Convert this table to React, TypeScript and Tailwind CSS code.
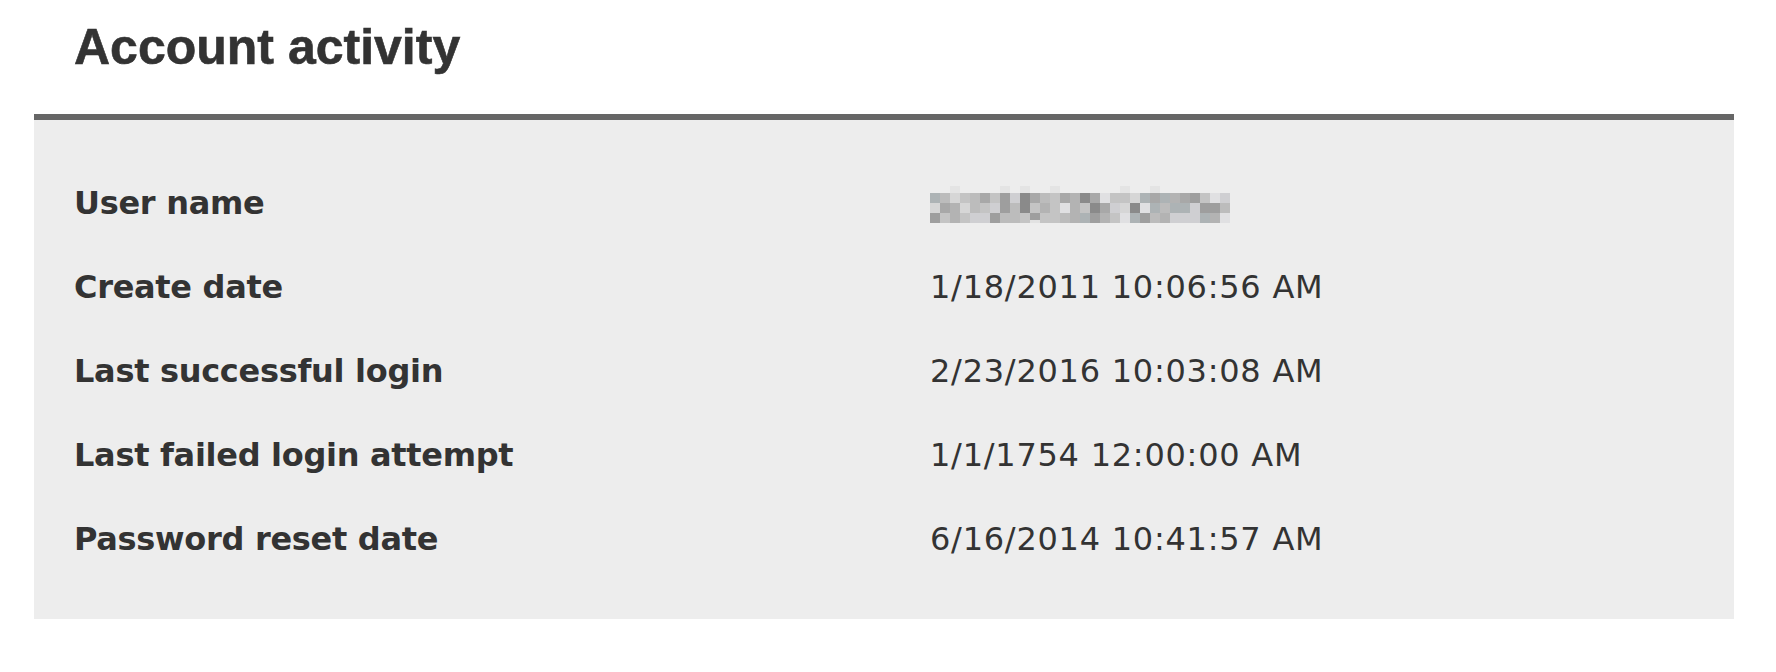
import React from "react"

// fake pixelated e-mail (blurred in the original), fixed pattern
const SHADES = ["#d6d6d6", "#a8a8a8", "#8a8a8a", "#c4c4c4", "#b3b3b3", "#9e9e9e", "#cfcfd2", "#e0e0e2", "#adb3b5", "#bcbcbc"]

function buildPixels() {
  let seed = 17
  const next = () => {
    seed = (seed * 9301 + 49297) % 233280
    return seed / 233280
  }
  const rows: string[][] = []
  for (let r = 0; r < 3; r++) {
    const row: string[] = []
    for (let c = 0; c < 30; c++) {
      let idx = Math.floor(next() * SHADES.length)
      if (r === 2 && idx < 3) idx += 3
      row.push(SHADES[idx])
    }
    rows.push(row)
  }
  return rows
}

const PIXELS = buildPixels()

function BlurredEmail() {
  return (
    <svg width="300" height="40" viewBox="0 0 300 40" className="block">
      {[2, 7, 9, 12, 19, 22].map((c) => (
        <rect key={"t" + c} x={c * 10} y={3} width={10} height={7} fill="#e4e4e4" />
      ))}
      {PIXELS.map((row, r) =>
        row.map((fill, c) => (
          <rect key={r + "-" + c} x={c * 10} y={10 + r * 10} width={10} height={10} fill={fill} />
        ))
      )}
      <rect x={100} y={37} width={10} height={3} fill="#e2e2e2" />
    </svg>
  )
}

const rows: { label: string; value: string | null }[] = [
  { label: "User name", value: null },
  { label: "Create date", value: "1/18/2011 10:06:56 AM" },
  { label: "Last successful login", value: "2/23/2016 10:03:08 AM" },
  { label: "Last failed login attempt", value: "1/1/1754 12:00:00 AM" },
  { label: "Password reset date", value: "6/16/2014 10:41:57 AM" },
]

export default function App() {
  return (
    <div className="w-[1776px] h-[672px] bg-white text-[#333333]">
      {/* Heading */}
      <div className="pl-[74px] pt-[22px]">
        <h1
          className="text-[50px] leading-none font-bold [-webkit-text-stroke:0.6px_#333333]"
          style={{ fontFamily: '"Liberation Sans", Arial, sans-serif' }}
        >
          Account activity
        </h1>
      </div>

      {/* Details panel */}
      <div className="ml-[34px] mt-[42px] w-[1700px] border-t-[6px] border-[#666666] bg-[#ededed] pl-[40px] pt-[41px] pb-[38px]">
        {rows.map((row) => (
          <div key={row.label} className="flex h-[84px] items-center" style={{ fontFamily: '"DejaVu Sans", Verdana, sans-serif' }}>
            <div className="w-[856px] text-[32px] font-bold tracking-[-0.3px]">{row.label}</div>
            <div className="text-[32px] tracking-[0.75px]">
              {row.value === null ? <BlurredEmail /> : row.value}
            </div>
          </div>
        ))}
      </div>
    </div>
  )
}
